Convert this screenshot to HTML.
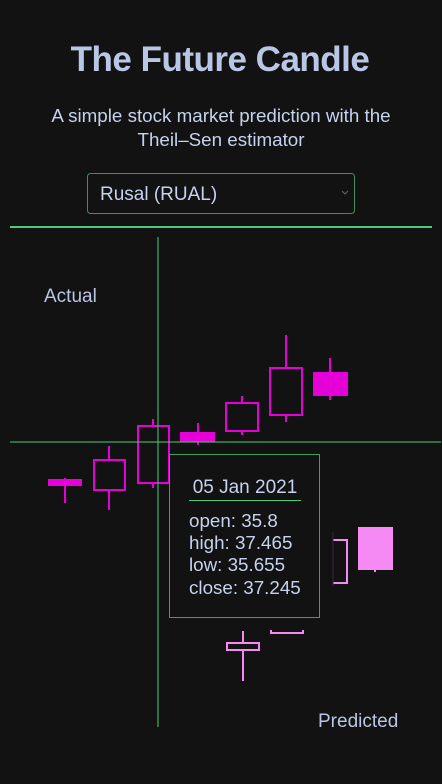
<!DOCTYPE html>
<html><head><meta charset="utf-8"><style>
html,body{margin:0;padding:0;background:#121212;width:442px;height:784px;overflow:hidden;font-family:"Liberation Sans",sans-serif}
</style></head><body>
<svg width="442" height="784" viewBox="0 0 442 784" xmlns="http://www.w3.org/2000/svg" style="position:absolute;left:0;top:0">
<rect width="442" height="784" fill="#121212"/>
<text x="220" y="71" text-anchor="middle" font-family="Liberation Sans" font-size="35" fill="#b9c6e6" font-weight="bold" letter-spacing="-0.5">The Future Candle</text>
<text x="221" y="122" text-anchor="middle" font-family="Liberation Sans" font-size="18.8" fill="#c6d2ee">A simple stock market prediction with the</text>
<text x="221" y="146" text-anchor="middle" font-family="Liberation Sans" font-size="18.8" fill="#c6d2ee">Theil–Sen estimator</text>
<rect x="87.5" y="173.5" width="267" height="40" rx="3" fill="#121212" stroke="#3f8f5a"/>
<text x="100" y="200" font-family="Liberation Sans" font-size="19" fill="#c6d2ee">Rusal (RUAL)</text>
<path d="M342 191 l3 3 l3 -3" fill="none" stroke="#666" stroke-width="1"/>
<line x1="10" y1="227" x2="432" y2="227" stroke="#4dc97a" stroke-width="2"/>
<text x="44" y="302" font-family="Liberation Sans" font-size="19" fill="#b9c6e6">Actual</text>
<text x="318" y="727" font-family="Liberation Sans" font-size="19" fill="#b9c6e6">Predicted</text>
<g stroke="#e600d8" stroke-width="2" fill="none">
<line x1="65" y1="478" x2="65" y2="503"/><rect x="49" y="480" width="32" height="5" fill="#e600d8"/>
<line x1="109" y1="446" x2="109" y2="510"/><rect x="94" y="460" width="31" height="30" fill="#121212"/>
<line x1="153" y1="419" x2="153" y2="488"/><rect x="138" y="426" width="31" height="57" fill="#121212"/>
<line x1="198" y1="423" x2="198" y2="445"/><rect x="181" y="433" width="33" height="8" fill="#e600d8"/>
<line x1="242" y1="396" x2="242" y2="435"/><rect x="226" y="403" width="32" height="28" fill="#121212"/>
<line x1="286" y1="335" x2="286" y2="422"/><rect x="270" y="368" width="32" height="47" fill="#121212"/>
<line x1="330" y1="358" x2="330" y2="400"/><rect x="314" y="373" width="33" height="22" fill="#e600d8"/>
</g>
<g stroke="#f58af5" stroke-width="2" fill="none">
<path d="M333 540 H347 V583 H333"/>
<line x1="375" y1="528" x2="375" y2="572"/><rect x="359" y="528" width="33" height="41" fill="#f58af5"/>
<line x1="243" y1="631" x2="243" y2="681"/><rect x="227" y="643" width="32" height="7" fill="#121212"/>
<path d="M271 630 V633 H303 V630"/>
</g>
<line x1="333" y1="532" x2="333" y2="586" stroke="#3a2a3a" stroke-width="1"/>
<line x1="158" y1="237" x2="158" y2="727" stroke="#4dc97a" stroke-width="1"/>
<line x1="10" y1="442" x2="441" y2="442" stroke="#4dc97a" stroke-width="1"/>
<rect x="169.5" y="454.5" width="150" height="163" fill="#121212" stroke="#3f9f60"/>
<text x="245" y="493" text-anchor="middle" font-family="Liberation Sans" font-size="19" fill="#c6d2ee">05 Jan 2021</text>
<line x1="189" y1="500.5" x2="301" y2="500.5" stroke="#4dc97a"/>
<g font-family="Liberation Sans" font-size="18.8" fill="#c6d2ee">
<text x="189" y="527">open: 35.8</text>
<text x="189" y="549">high: 37.465</text>
<text x="189" y="571">low: 35.655</text>
<text x="189" y="594">close: 37.245</text>
</g>
</svg>
</body></html>
